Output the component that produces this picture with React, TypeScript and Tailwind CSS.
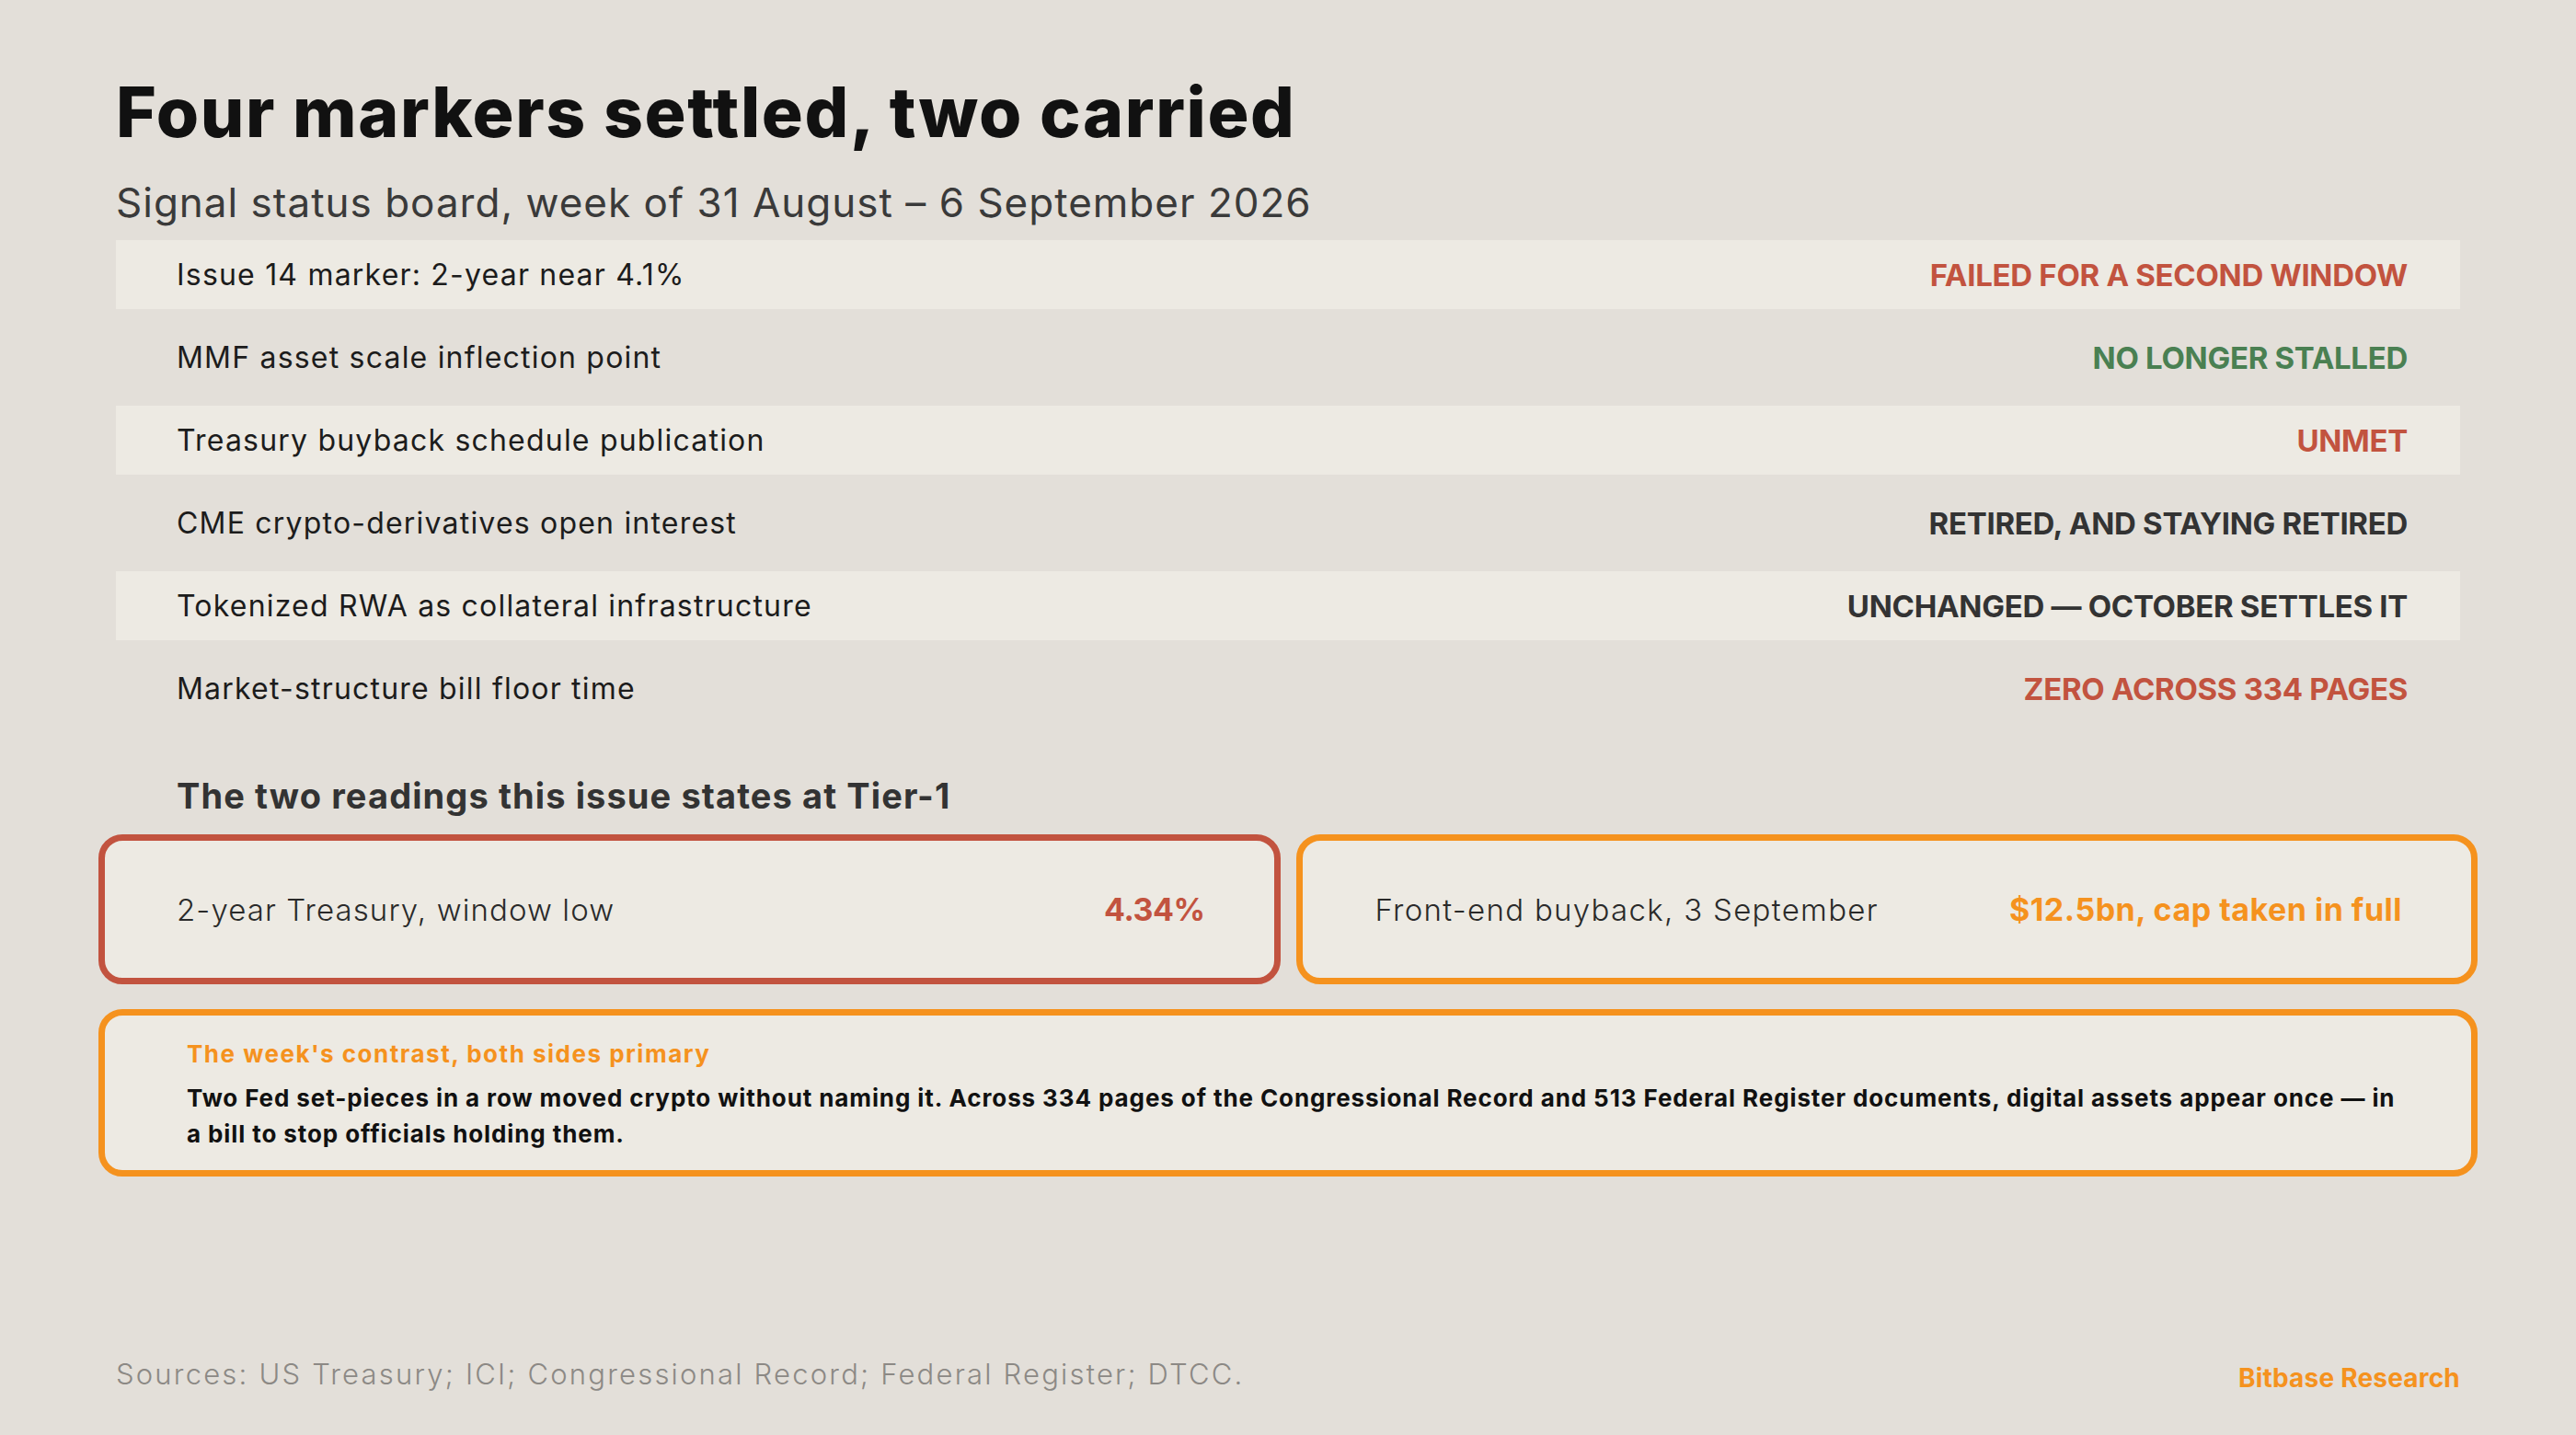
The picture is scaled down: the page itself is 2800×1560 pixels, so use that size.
const rows = [
  { label: "Issue 14 marker: 2-year near 4.1%", status: "FAILED FOR A SECOND WINDOW", tone: "text-[#c2533f]", band: true },
  { label: "MMF asset scale inflection point", status: "NO LONGER STALLED", tone: "text-[#4a8052]", band: false },
  { label: "Treasury buyback schedule publication", status: "UNMET", tone: "text-[#c2533f]", band: true },
  { label: "CME crypto-derivatives open interest", status: "RETIRED, AND STAYING RETIRED", tone: "text-[#333333]", band: false },
  { label: "Tokenized RWA as collateral infrastructure", status: "UNCHANGED — OCTOBER SETTLES IT", tone: "text-[#333333]", band: true },
  { label: "Market-structure bill floor time", status: "ZERO ACROSS 334 PAGES", tone: "text-[#c2533f]", band: false },
];

export default function App() {
  return (
    <div className="flex h-[1560px] w-[2800px] flex-col bg-[#e3dfd9] px-[126px] font-['Inter',sans-serif]">
      <h1 className="pt-[82px] text-[75px] font-extrabold leading-[80px] tracking-[1.6px] text-[#111111]">
        Four markers settled, two carried
      </h1>
      <p className="mt-[32px] text-[44px] font-normal leading-[52px] tracking-[1px] text-[#3a3a3a]">
        Signal status board, week of 31 August – 6 September 2026
      </p>

      {/* status board */}
      <div className="mt-[15px] flex flex-col gap-[15px]">
        {rows.map((r) => (
          <div
            key={r.label}
            className={`flex h-[75px] items-center justify-between pl-[66px] pr-[57px] ${r.band ? "bg-[#edeae3]" : ""}`}
          >
            <span className="text-[32px] leading-[40px] tracking-[1.2px] text-[#1c1c1c]">{r.label}</span>
            <span className={`text-[33px] font-bold leading-[40px] tracking-[-0.3px] ${r.tone}`}>{r.status}</span>
          </div>
        ))}
      </div>

      <h2 className="mt-[57px] pl-[66px] text-[38px] font-bold leading-[44px] tracking-[1.1px] text-[#333333]">
        The two readings this issue states at Tier-1
      </h2>

      <div className="-mx-[19px] mt-[20px] grid grid-cols-2 gap-[17px]">
        <div className="flex h-[163px] items-center justify-between rounded-[26px] border-[7px] border-[#c2533f] bg-[#edeae3] pl-[78px] pr-[75px]">
          <span className="text-[33px] font-light leading-[40px] tracking-[1.1px] text-[#2a2a2a]">2-year Treasury, window low</span>
          <span className="text-[34px] font-bold leading-[40px] tracking-[-0.5px] text-[#c2533f]">4.34%</span>
        </div>
        <div className="flex h-[163px] items-center justify-between rounded-[26px] border-[7px] border-[#f5921e] bg-[#edeae3] pl-[79px] pr-[75px]">
          <span className="text-[33px] font-light leading-[40px] tracking-[1.3px] text-[#2a2a2a]">Front-end buyback, 3 September</span>
          <span className="text-[34px] font-bold leading-[40px] tracking-[0.5px] text-[#f5921e]">$12.5bn, cap taken in full</span>
        </div>
      </div>

      <div className="-mx-[19px] mt-[27px] h-[182px] rounded-[26px] border-[7px] border-[#f5921e] bg-[#edeae3] pl-[89px] pr-[60px] pt-[26px]">
        <p className="text-[26px] font-bold leading-[32px] tracking-[1.5px] text-[#f5921e]">The week's contrast, both sides primary</p>
        <p className="mt-[12px] text-[26px] font-bold leading-[39px] tracking-[0.9px] text-[#111111]">
          Two Fed set-pieces in a row moved crypto without naming it. Across 334 pages of the Congressional Record and 513 Federal Register documents, digital assets appear once — in
          <br />
          a bill to stop officials holding them.
        </p>
      </div>

      <div className="mt-auto flex items-baseline justify-between pb-[47px]">
        <span className="text-[31px] font-light leading-[36px] tracking-[2.2px] text-[#8c8985]">
          Sources: US Treasury; ICI; Congressional Record; Federal Register; DTCC.
        </span>
        <span className="relative top-[3px] text-[28px] font-bold leading-[36px] tracking-[0.2px] text-[#f5921e]">Bitbase Research</span>
      </div>
    </div>
  );
}
